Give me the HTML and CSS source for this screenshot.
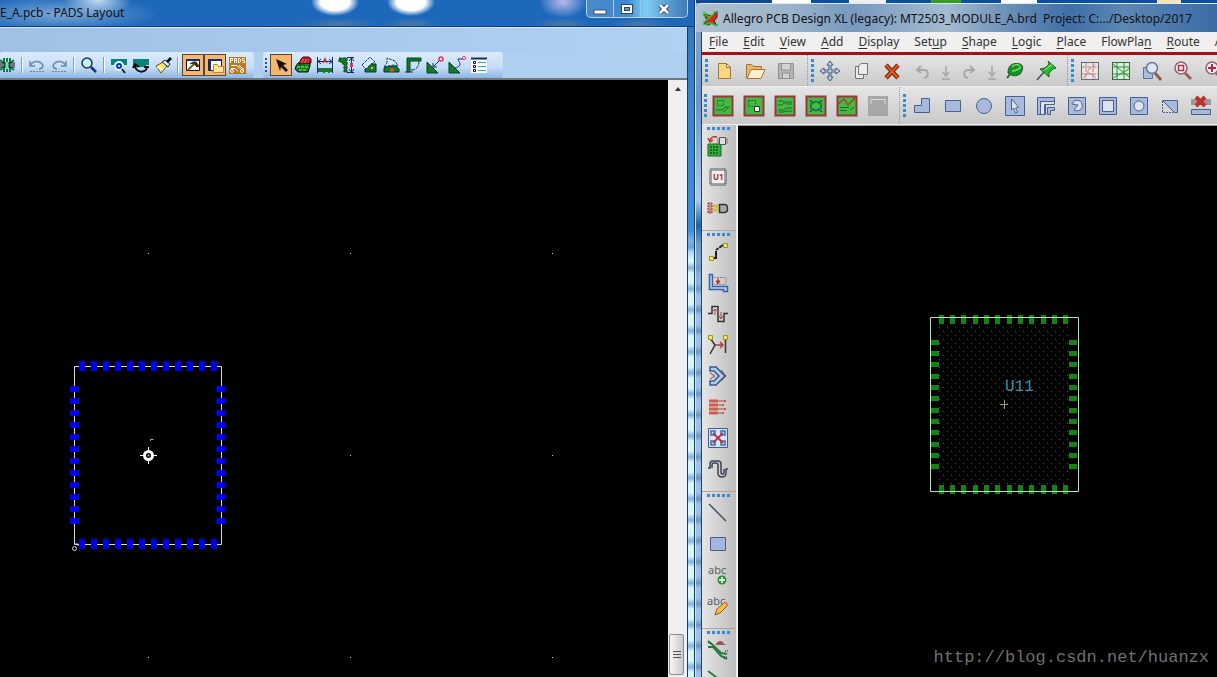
FILE: index.html
```html
<!DOCTYPE html>
<html lang="en">
<head>
<meta charset="utf-8">
<title>PCB layout windows</title>
<link rel="stylesheet" href="styles.css">
</head>
<body>
<main class="desktop">
<section class="window pads">
  <header class="titlebar">
    <span class="title">E_A.pcb - PADS Layout</span>
    <div class="controls">
      <button class="control" aria-label="Minimize"><svg width="14" height="12"><rect x="1" y="7" width="12" height="4" fill="#fff" stroke="#456"/></svg></button>
      <button class="control" aria-label="Maximize"><svg width="14" height="12"><rect x="1.500" y="1.500" width="11" height="9" fill="#fff" stroke="#345"/><rect x="4.500" y="4.500" width="5" height="3" fill="#69b" stroke="#345"/></svg></button>
      <button class="control close" aria-label="Close"><svg width="14" height="12"><path d="M3 2l8 8M11 2l-8 8" stroke="#345" stroke-width="4.500"/><path d="M3 2l8 8M11 2l-8 8" stroke="#fff" stroke-width="2.500"/></svg></button>
    </div>
  </header>
  <div class="client">
    <div class="strip"></div>
    <div class="tools">
      <div class="bar bar-main">
        <button class="tool" aria-label="Route"><svg width="20" height="20" fill="none"><path d="M10 3v14M7 3v5L3 5M13 3v5l4-3M7 17v-5l-4 3M13 17v-5l4 3" stroke="#137c45" stroke-width="2"/><path d="M2 8h16M2 10h16M2 12h16" stroke="#111"/><path d="M9 7h2v7H9z" fill="#4f9"/></svg></button>
        <i class="sep"></i>
        <button class="tool" aria-label="Undo"><svg width="20" height="20" fill="none" stroke="#7187a6"><path d="M3 6v5h5M3 11c3-6 11-6 13 0-1 3-3 3-4 3" stroke-width="1.500"/><path d="M3 16.500h14" stroke-dasharray="2 1"/></svg></button>
        <button class="tool" aria-label="Redo"><svg width="20" height="20" fill="none" stroke="#7187a6"><path d="M17 6v5h-5M17 11C14 5 6 5 4 11c1 3 3 3 4 3" stroke-width="1.500"/><path d="M3 16.500h14" stroke-dasharray="2 1"/></svg></button>
        <i class="sep"></i>
        <button class="tool" aria-label="Zoom"><svg width="20" height="20"><circle cx="8" cy="8" r="5" fill="#bff4ff" stroke="#234" stroke-width="1.500"/><path d="M12 12l5 5" stroke="#138" stroke-width="2.500"/></svg></button>
        <i class="sep"></i>
        <button class="tool" aria-label="Board view"><svg width="20" height="20"><path d="M2 4h16v6h-3v3H5v-3H2z" fill="#078478"/><circle cx="10" cy="11" r="4" fill="#13c" stroke="#dff" stroke-width="2"/><path d="M13 14l3 4" stroke="#123" stroke-width="2"/><circle cx="10" cy="11" r="1" fill="#fff"/></svg></button>
        <button class="tool" aria-label="Redraw"><svg width="20" height="20"><path d="M2 4h16v6h-3v2H5v-2H2z" fill="#078478"/><path d="M4 10c0 8 11 9 12 2M2 13l2-4 4 3M13 12h5" fill="none" stroke="#111" stroke-width="2"/></svg></button>
        <button class="tool" aria-label="Highlight"><svg width="20" height="20"><path d="M3 11l7-4 4 4-6 7z" fill="#ffe66b" stroke="#555"/><path d="M9 7l6 5 2-3-5-4z" fill="#cdeaf5" stroke="#222"/><path d="M13 6l4-4 2 2-4 4z" fill="#111"/><path d="M6 11l4 4M4 12l4 3" stroke="#fff"/></svg></button>
        <i class="sep"></i>
        <button class="tool active" aria-label="Design toolbar"><svg width="20" height="20"><path d="M3.500 4.500h13v11h-13z" fill="#fff" stroke="#111"/><path d="M3 5h14" stroke="#12307c" stroke-width="2"/><path d="M7 9l3-2h3l3 4-2 1-3-3" fill="#3a3519" stroke="#3a3519"/><path d="M11 9l-6 6" stroke="#6a6120" stroke-width="2"/></svg></button>
        <button class="tool active" aria-label="Drafting toolbar"><svg width="20" height="20"><path d="M3.500 4.500h13v11h-13z" fill="#fff" stroke="#223"/><path d="M3 5h14M5 5v10" stroke="#12307c" stroke-width="2"/><path d="M8.500 9.500h4l1 2h5v6h-10z" fill="#ffe49b" stroke="#b58832"/></svg></button>
        <button class="tool" aria-label="PADS Router"><svg width="20" height="20"><rect x="2" y="2" width="17" height="17" fill="#b97822"/><g fill="none" stroke="#fff"><path d="M3.500 8V3.500h2v2h-2M7.500 8V3.500h2V8M7 5.500h3M11.500 3.500h1l1 1v2l-1 1h-1zM17.500 3.500h-2v2h2v2h-2M4 10.500h6l4 4M4 13.500h4l3 3M12 10.500l5 4"/><circle cx="5" cy="16" r="1.500"/><circle cx="15" cy="16" r="1.500"/></g></svg></button>
      </div>
      <div class="bar bar-draft">
        <i class="dots"></i>
        <button class="tool active" aria-label="Select"><svg width="20" height="20"><path d="M5 4l11 5-4 1 5 5-2 2-5-5-1 4z" fill="#111"/></svg></button>
        <button class="tool" aria-label="Move"><svg width="20" height="20"><path d="M3 11l2-3h12v3l-2 6H5l-3-3z" fill="#157a28" stroke="#111"/><path d="M6 9l2-5 2-2h6l2 2v4z" fill="#b91f20" stroke="#411"/><path d="M4 12h12M6 15h8" stroke="#8f5" stroke-dasharray="3 1"/><path d="M9 5h7M8 7h7" stroke="#f77" stroke-dasharray="2 1"/></svg></button>
        <button class="tool" aria-label="Horizontal dimension"><svg width="20" height="20"><path d="M3 13h14v4h-2v1h-2v-1h-3v1H8v-1H3z" fill="#157a28"/><path d="M2.500 2v16M17.500 2v16M3 6.500h14M6 4L3 6.500 6 9M14 4l3 2.500L14 9" fill="none" stroke="#12266e"/><path d="M8 8l2-4 2 4" fill="none" stroke="#c24" stroke-width="1.500"/></svg></button>
        <button class="tool" aria-label="Vertical dimension"><svg width="20" height="20"><path d="M2 3h8v14H7V9H5V7H2z" fill="#157a28" stroke="#042" stroke-dasharray="3 1"/><path d="M10 2.500h7M10 17.500h7M14.500 3v14M12 6l2.500-3L17 6M12 14l2.500 3 2.500-3" fill="none" stroke="#12266e"/><path d="M14.500 8v4" stroke="#d35" stroke-width="3"/></svg></button>
        <button class="tool" aria-label="Aligned dimension"><svg width="20" height="20"><path d="M6 17v-3l5-5h6v8z" fill="#157a28" stroke="#033"/><path d="M3 10l8-8 5 5-4 2-5 5z" fill="#d6eafb" stroke="#12366e" stroke-dasharray="3 1"/><path d="M12 13h2" stroke="#eb4" stroke-width="2"/></svg></button>
        <button class="tool" aria-label="Rotated dimension"><svg width="20" height="20"><path d="M3 17v-4l5-2h7l3 3v3z" fill="#157a28" stroke="#033"/><path d="M3 12l3-4V3l8 3 3 5-4-1-6 1z" fill="#d6eafb" stroke="#12366e" stroke-dasharray="3 1"/><path d="M9 15h4" stroke="#e42" stroke-width="3"/></svg></button>
        <button class="tool" aria-label="Angular dimension"><svg width="20" height="20"><path d="M4 3h14v3H7v11H4z" fill="#157a28" stroke="#042"/><path d="M8 15c6 0 8-4 8-9M2 17h8" fill="none" stroke="#12366e" stroke-dasharray="4 1"/></svg></button>
        <button class="tool" aria-label="Arc dimension"><svg width="20" height="20"><path d="M2 7l11 11H2z" fill="#157a28" stroke="#042"/><path d="M8 12l6-6M8 8v4h4" fill="none" stroke="#12266e"/><circle cx="16" cy="4" r="2" fill="none" stroke="#d35" stroke-width="1.500"/></svg></button>
        <button class="tool" aria-label="Leader"><svg width="20" height="20"><path d="M2 7l11 11H2z" fill="#157a28" stroke="#042"/><path d="M8 13c9-2 3-7 3-9h6" fill="none" stroke="#12266e"/><circle cx="17" cy="3" r="1.500" fill="#fff" stroke="#d35"/></svg></button>
        <button class="tool" aria-label="Options"><svg width="20" height="20"><path d="M2 2h16v16H2z" fill="#f7fbff"/><path d="M2 3.500h16" stroke="#12266e" stroke-width="2"/><path d="M4.500 6.500h2v2h-2zM4.500 10.500h2v2h-2zM4.500 14.500h2v2h-2z" fill="none" stroke="#111"/><path d="M9 7.500h8M9 11.500h8M9 15.500h8" stroke="#3ab"/></svg></button>
      </div>
    </div>
    <div class="work">
      <svg class="canvas" role="img" aria-label="Board footprint">
        <path d="M74.500 286.500h147v178h-147z" fill="none" stroke="#d8d8d8"/>
        <g stroke="#0000f0" fill="none">
          <path d="M79 286h138M79 464h138" stroke-width="10" stroke-dasharray="6 6"/>
          <path d="M74.500 306v138M221 306v138" stroke-width="9" stroke-dasharray="6 6"/>
        </g>
        <path d="M148.500 367v17M140 375.500h17" stroke="#fff"/>
        <circle cx="148.500" cy="375.500" r="4" fill="#000" stroke="#fff" stroke-width="3"/>
        <circle cx="148.500" cy="375.500" r="1" fill="#ccc"/>
        <path d="M150.500 361v-1.500h3" fill="none" stroke="#aaa"/>
        <circle cx="74.500" cy="468.500" r="2" fill="none" stroke="#ddd"/>
        <path d="M75 464h3v2" fill="none" stroke="#ddd"/>
        <path d="M148 173.500h1m201 0h1m201 0h1M350 375.500h1m201 0h1M148 577.500h1m201 0h1m201 0h1" stroke="#ccc"/>
      </svg>
      <div class="scrollbar">
        <button class="scroll-up" aria-label="Scroll up"><svg width="8" height="6"><path d="M1 5l3-4 3 4z" fill="#333"/></svg></button>
        <button class="thumb" aria-label="Scroll position"><svg width="8" height="10"><path d="M0 1.500h8M0 4.500h8M0 7.500h8" stroke="#555"/></svg></button>
      </div>
    </div>
  </div>
</section>

<section class="window allegro">
  <div class="wallpaper"></div>
  <header class="titlebar">
    <svg width="17" height="17"><path d="M2 5c3-3 6 3 9 0l4-4v6l-3 4 3 5-5-3-4 2-4-1 3-4z" fill="#dc2419" stroke="#511"/><path d="M1 2c4 0 3 4 6 5M11 2h4M12 4c-5 2-5 7-11 8M1 14c4 2 5-2 8-1s4 4 7 1M1 4l2 3" fill="none" stroke="#19d332" stroke-width="1.500"/></svg>
    <span class="title">Allegro PCB Design XL (legacy): MT2503_MODULE_A.brd&nbsp; Project: C:.../Desktop/2017</span>
  </header>
  <div class="client">
    <nav class="menu">
      <button><u>F</u>ile</button><button><u>E</u>dit</button><button><u>V</u>iew</button><button><u>A</u>dd</button><button><u>D</u>isplay</button><button>Set<u>u</u>p</button><button><u>S</u>hape</button><button><u>L</u>ogic</button><button><u>P</u>lace</button><button>FlowPla<u>n</u></button><button><u>R</u>oute</button><button>A</button>
    </nav>
    <div class="row">
      <div class="group">
        <i class="grip"></i>
        <button class="icon" aria-label="New"><svg width="22" height="22"><path d="M5.500 3.500h8l4 4v11h-12z" fill="#fbd488" stroke="#a8782a"/><path d="M13.500 3.500v4h4z" fill="#fff3cf" stroke="#a8782a"/></svg></button>
        <button class="icon" aria-label="Open"><svg width="22" height="22"><path d="M2.500 18V4.500h5l2 2h8v4" fill="#e9b765" stroke="#a47532"/><path d="M3 18.500l4-9h14l-4 9z" fill="#fff0d0" stroke="#a47532"/></svg></button>
        <button class="icon" aria-label="Save" disabled><svg width="22" height="22"><path d="M3.500 3.500h15v15h-15z" fill="#b4b4b4" stroke="#929292"/><path d="M6.500 4v6h9V4M7.500 18v-5h7v5" fill="#d3d3d3" stroke="#929292"/></svg></button>
      </div>
      <div class="group">
        <i class="grip"></i>
        <button class="icon" aria-label="Move"><svg width="22" height="22"><path d="M11 1l3 4h-2v5h5V8l4 3-4 3v-2h-5v5h2l-3 4-3-4h2v-5H5v2l-4-3 4-3v2h5V5H8z" fill="#c3d2e4" stroke="#41597b"/></svg></button>
        <button class="icon" aria-label="Copy"><svg width="22" height="22" fill="#ececec" stroke="#6f7478"><path d="M5.500 6.500h8v12h-8z"/><path d="M11 3.500h6.500v11h-9V6z"/></svg></button>
        <button class="icon" aria-label="Delete"><svg width="22" height="22"><path d="M5 5l12 13M17 5L5 18" stroke="#77250b" stroke-width="4.500"/><path d="M5 5l12 13M17 5L5 18" stroke="#dd5a21" stroke-width="2"/></svg></button>
        <button class="icon" aria-label="Undo" disabled><svg width="22" height="22" fill="none" stroke="#a7a7a7"><path d="M9 6l-4 4 4 3M5 10h7c5 0 5 7 0 8" stroke-width="2"/></svg></button>
        <button class="icon narrow" aria-label="Undo steps" disabled><svg width="12" height="22" fill="none" stroke="#a7a7a7"><path d="M6 6v9M3 12l3 4 3-4M2 19h8" stroke-width="1.500"/></svg></button>
        <button class="icon" aria-label="Redo" disabled><svg width="22" height="22" fill="none" stroke="#a7a7a7"><path d="M12 6l4 4-4 3M16 10h-6c-5 0-5 7 0 8" stroke-width="2"/></svg></button>
        <button class="icon narrow" aria-label="Redo steps" disabled><svg width="12" height="22" fill="none" stroke="#a7a7a7"><path d="M6 6v9M3 12l3 4 3-4M2 19h8" stroke-width="1.500"/></svg></button>
        <button class="icon" aria-label="Fix"><svg width="22" height="22"><path d="M3 18l4-5" stroke="#285e2d" stroke-width="2"/><path d="M4 13c0-7 4-11 12-9 4 1 3 7 0 10-3 2-7 3-12-1z" fill="#19902a" stroke="#175c20"/><path d="M8 7c2-3 6-3 8-1M8 11c3 0 7-2 9-4" fill="none" stroke="#78dd76" stroke-width="1.500"/></svg></button>
        <button class="icon" aria-label="Unfix"><svg width="22" height="22"><path d="M2 20l7-8" stroke="#3d5741" stroke-width="1.500"/><path d="M13 1l8 7-3 1-4 4v4L5 9l5-1 4-4z" fill="#2cb435" stroke="#12691f"/><path d="M10 10l5-4 2-1" fill="none" stroke="#a3ed9e"/></svg></button>
      </div>
      <div class="group">
        <i class="grip"></i>
        <button class="icon" aria-label="Grid"><svg width="22" height="22"><rect x="2.500" y="2.500" width="17" height="17" fill="#e9e6e8" stroke="#626b78"/><path d="M3 7h16M3 14h16M7 3v16M14 3v16M4 18l5-5v-3l8-6M10 13l7 5" fill="none" stroke="#c27f79" stroke-dasharray="4 1"/></svg></button>
        <button class="icon" aria-label="Ratsnest"><svg width="22" height="22"><rect x="2.500" y="2.500" width="17" height="17" fill="#d9efd7" stroke="#3b6847"/><path d="M3 7h16M3 14h16M7 3v16M14 3v16M3 4l16 13M3 18l16-9" stroke="#349044"/></svg></button>
        <button class="icon" aria-label="Zoom by points"><svg width="22" height="22"><path d="M2.500 7.500h9v11h-9z" fill="#a3bce0" stroke="#5573a1"/><path d="M14 13l6 7" stroke="#985c43" stroke-width="3"/><circle cx="11" cy="8" r="5.500" fill="#dce9f4" stroke="#6f7893" stroke-width="1.500"/></svg></button>
        <button class="icon" aria-label="Zoom fit"><svg width="22" height="22"><path d="M13 13l6 6" stroke="#986252" stroke-width="3"/><circle cx="9" cy="8" r="6" fill="#f3edf1" stroke="#8b6673" stroke-width="1.500"/><path d="M6.500 5.500h5v5h-5z" fill="none" stroke="#aa3750" stroke-width="1.500"/></svg></button>
        <button class="icon" aria-label="Zoom in"><svg width="22" height="22"><path d="M13 13l6 6" stroke="#986252" stroke-width="3"/><circle cx="9" cy="8" r="6" fill="#f3edf1" stroke="#8b6673" stroke-width="1.500"/><path d="M9 4v8M5 8h8" stroke="#b4243f" stroke-width="2"/></svg></button>
      </div>
    </div>
    <div class="row">
      <div class="group modes">
        <i class="grip"></i>
        <button class="icon" aria-label="Etch edit mode"><svg width="22" height="22"><rect x="1.500" y="1.500" width="19" height="19" fill="#46b844" stroke="#99353c" stroke-width="2"/><g fill="none" stroke="#176e22"><path d="M5.500 5.500h6v5h-6z" stroke-dasharray="2 1"/><path d="M4 15h6l3-3h5M11 17l5-4"/></g></svg></button>
        <button class="icon" aria-label="Placement mode"><svg width="22" height="22"><rect x="1.500" y="1.500" width="19" height="19" fill="#46b844" stroke="#99353c" stroke-width="2"/><path d="M5.500 5.500h7v6h-7z" fill="none" stroke="#176e22" stroke-dasharray="2 1"/><path d="M11.500 11.500h5v5h-5z" fill="#eef6ee" stroke="#333"/></svg></button>
        <button class="icon" aria-label="Flow mode"><svg width="22" height="22"><rect x="1.500" y="1.500" width="19" height="19" fill="#46b844" stroke="#99353c" stroke-width="2"/><path d="M4 6h5l3 3h6M4 10h4l3-3h7M4 15h6l2-2h6M5 17h4l4-1h5" fill="none" stroke="#176e22"/></svg></button>
        <button class="icon" aria-label="General edit"><svg width="22" height="22"><rect x="1.500" y="1.500" width="19" height="19" fill="#46b844" stroke="#99353c" stroke-width="2"/><path d="M5 5l3 3c2-2 4-2 6 0l3-3M5 17l3-3c2 2 4 2 6 0l3 3M6 8v6M16 8v6" fill="none" stroke="#176154" stroke-width="1.500"/></svg></button>
        <button class="icon" aria-label="Signal mode"><svg width="22" height="22"><rect x="1.500" y="1.500" width="19" height="19" fill="#46b844" stroke="#99353c" stroke-width="2"/><path d="M2 9l6-5 4 6 7-7" fill="none" stroke="#984925" stroke-width="1.500"/><path d="M4 12.500h9M4 15.500h7M14 15l4-3" fill="none" stroke="#176e22"/></svg></button>
        <button class="icon" aria-label="Shape mode" disabled><svg width="22" height="22"><rect x="1" y="1" width="20" height="20" fill="#a7a7a7"/><path d="M4 9V4.500h14V9" fill="none" stroke="#ddd"/></svg></button>
      </div>
      <div class="group shapes">
        <i class="grip"></i>
        <button class="icon" aria-label="Polygon"><svg width="22" height="22"><path d="M10.500 3.500h8v14h-15v-7h7z"/></svg></button>
        <button class="icon" aria-label="Rectangle"><svg width="22" height="22"><path d="M3.500 5.500h15v11h-15z"/></svg></button>
        <button class="icon" aria-label="Circle"><svg width="22" height="22"><circle cx="11" cy="11" r="7.500"/></svg></button>
        <button class="icon" aria-label="Select shape"><svg width="22" height="22"><path d="M1.500 1.500h19v19h-19z"/><path class="inner" d="M7.500 4l7 8-3 1 2 4-2 1-2-5-2 2z"/></svg></button>
        <button class="icon" aria-label="Void polygon"><svg width="22" height="22"><path d="M2.500 2.500h17v5h-9v12h-8z"/><path class="inner" d="M5.500 6.500h14v3h-10v10h-4z"/><path d="M12.500 12.500h7v3h-4v4h-3z"/></svg></button>
        <button class="icon" aria-label="Void arc"><svg width="22" height="22"><path d="M2.500 2.500h17v17h-17z"/><path class="inner" d="M6 9c2-5 9-5 10 0 2 6-5 8-8 6l4-5z"/></svg></button>
        <button class="icon" aria-label="Void rectangle"><svg width="22" height="22"><path d="M2.500 2.500h17v17h-17z"/><path class="inner" d="M5.500 5.500h11v11h-11z"/></svg></button>
        <button class="icon" aria-label="Void circle"><svg width="22" height="22"><path d="M2.500 2.500h17v17h-17z"/><circle class="inner" cx="11" cy="11" r="5"/></svg></button>
        <button class="icon" aria-label="Edit boundary"><svg width="22" height="22"><path d="M3.500 5.500h15v12h-3z"/><path class="hollow" d="M3.500 6v11.500h11" stroke-dasharray="2 1"/></svg></button>
        <button class="icon" aria-label="Delete islands"><svg width="22" height="22"><path d="M1.500 14.500h19v5h-19z"/><path class="muted" d="M1 4h20v6H1z"/><path class="cross" d="M6 2l9 9M15 2l-9 9"/></svg></button>
      </div>
    </div>
    <div class="work">
      <aside class="side">
        <div class="vgroup">
          <i class="hgrip"></i>
          <button class="icon" aria-label="Place manual"><svg width="22" height="22"><path d="M1 9h13v12H1z" fill="#36ac3d" stroke="#176625"/><path d="M3 12h9M3 15h9M3 18h9" stroke="#136a20" stroke-width="2" stroke-dasharray="2 1"/><path d="M10 4h11M10 6h11M10 8h11" stroke="#777"/><path d="M12.500 2.500h6v7h-6z" fill="#ddd" stroke="#555"/><path d="M10 2c-4-1-6 0-7 4M1 3l2 4 3-2" fill="none" stroke="#b93431" stroke-width="1.500"/></svg></button>
          <button class="icon" aria-label="Component"><svg width="22" height="22"><path d="M3.500 3.500h15v15h-15z" fill="#efefef" stroke="#505b65" stroke-width="3" stroke-dasharray="1 1"/><text class="chip" x="6" y="14">U1</text></svg></button>
          <button class="icon" aria-label="Swap"><svg width="22" height="22"><path d="M1 6h4v10H1z" fill="#d1868c" stroke="#833" stroke-dasharray="2 1"/><path d="M6 9h5M6 13h5" stroke="#cebf2c" stroke-width="3"/><path d="M12.500 7.500h5c4 0 4 8 0 8h-5z" fill="#aaa" stroke="#333" stroke-width="1.500"/></svg></button>
        </div>
        <div class="vgroup">
          <i class="hgrip"></i>
          <button class="icon" aria-label="Add connect"><svg width="22" height="22"><path d="M4 17h5V9l7-5" fill="none" stroke="#222" stroke-width="2" stroke-dasharray="12 1 3 1"/><path d="M2.500 15.500h4v4h-4zM16.500 2.500h4v4h-4z" fill="#f3e959" stroke="#9a922e"/></svg></button>
          <button class="icon" aria-label="Slide"><svg width="22" height="22"><path d="M2.500 2.500h3v12h15v5h-4v-2h-14z" fill="#b9d4f2" stroke="#3e619f" stroke-width="1.500"/><path d="M7 5.500h12v7H7" fill="none" stroke="#789" stroke-dasharray="2 1"/><path d="M11 6v4M9 9l2 3 2-3z" fill="#b53333" stroke="#b53333"/></svg></button>
          <button class="icon" aria-label="Delay tune"><svg width="22" height="22" fill="none"><path d="M1 10.500h4v-7h6v15h6v-8h4" stroke="#333" stroke-width="1.500"/><path d="M8 12V6M6 8l2-2 2 2M14 9v6M12 13l2 3 2-3" stroke="#ae3c43"/></svg></button>
          <button class="icon" aria-label="Custom smooth"><svg width="22" height="22" fill="none"><path d="M3 4l5 7-5 9M18.500 4v15" stroke="#333" stroke-width="1.500"/><path d="M8 11h7M13 8l3 3-3 3" stroke="#b33c3c" stroke-width="1.500"/><path d="M1.500 1.500h4v4h-4zM16.500 1.500h4v4h-4z" fill="#f0e65a" stroke="#9a922e"/></svg></button>
          <button class="icon" aria-label="Spread"><svg width="22" height="22"><path d="M3 2h6l9 9-9 9H3v-4h4l5-5-5-5H3z" fill="#b2cdec" stroke="#37588e" stroke-width="1.500"/><path d="M3 8l5 3-5 3M14 5l5 6-5 5" fill="none" stroke="#8c3943"/></svg></button>
          <button class="icon" aria-label="Bus route"><svg width="22" height="22"><path d="M2 5h9M2 9h9M2 13h9M2 17h9" stroke="#cc5e50" stroke-width="3"/><path d="M11 5h7M11 9h5M11 13h7M11 17h5" stroke="#a8483e"/><path d="M17 4h2v2h-2zM15 8h2v2h-2zM17 12h2v2h-2zM15 16h2v2h-2z" fill="#c65b49"/></svg></button>
          <button class="icon" aria-label="Fanout"><svg width="22" height="22"><path d="M1.500 1.500h19v19h-19z" fill="#d8e6f6" stroke="#3e5c9e"/><path d="M4 4h4v4H4zM14 4h4v4h-4zM4 14h4v4H4zM14 14h4v4h-4z" fill="none" stroke="#4169ad" stroke-width="1.500"/><path d="M6 6l10 10M16 6L6 16" stroke="#b4384a" stroke-width="2"/></svg></button>
          <button class="icon" aria-label="Meander"><svg width="22" height="22" fill="none"><path d="M1 10h2V6c0-2 1-3 3-3h5c2 0 3 1 3 3v8M5 10V7c0-1 1-2 2-2h2c1 0 2 1 2 2v8c0 3 2 4 4 4s4-1 4-4v-4h2M14 14c0 3 3 3 3 0v-3" stroke="#3b4356" stroke-width="1.500"/></svg></button>
        </div>
        <div class="vgroup">
          <i class="hgrip"></i>
          <button class="icon" aria-label="Line"><svg width="22" height="22"><path d="M2 2l17 17" stroke="#42536a" stroke-width="1.500"/></svg></button>
          <button class="icon" aria-label="Rectangle"><svg width="22" height="22"><path d="M3.500 4.500h15v13h-15z" fill="#a5b5df" stroke="#48628f"/></svg></button>
          <button class="icon" aria-label="Add text"><svg width="22" height="26"><text class="abc" x="1" y="12">abc</text><circle cx="15" cy="18" r="4.500" fill="#2d9235"/><path d="M15 15v6M12 18h6" stroke="#fff" stroke-width="1.500"/></svg></button>
          <button class="icon" aria-label="Edit text"><svg width="22" height="26"><text class="abc" x="0" y="12">abc</text><path d="M8 22l2-6 8-7 3 3-8 8z" fill="#f3bc42" stroke="#8d5923"/><path d="M18 9l3 3" stroke="#dd796e" stroke-width="2"/></svg></button>
        </div>
        <div class="vgroup">
          <i class="hgrip"></i>
          <button class="icon" aria-label="Net route"><svg width="22" height="22"><path d="M1 2l6 5 7 7 6 1M1 8h5l8 9 6 3" fill="none" stroke="#287d43" stroke-width="2"/><path d="M1 4h4M17 18h4M18 12h3" stroke="#222" stroke-dasharray="1 1"/><path d="M9 5c2-4 7-4 8 0l3 1H9z" fill="#985553"/></svg></button>
          <button class="icon" aria-label="Net edit"><svg width="22" height="22"><path d="M1 1l8 6 8 8" fill="none" stroke="#287d43" stroke-width="2"/></svg></button>
        </div>
      </aside>
      <div class="board">
        <svg class="canvas" role="img" aria-label="Module footprint U11">
          <defs><pattern id="mesh" width="8" height="8" patternUnits="userSpaceOnUse"><path d="M1 1.500h1M5 5.500h1" stroke="#4b574b"/></pattern></defs>
          <path d="M200 199h133v159H200z" fill="url(#mesh)"/>
          <g stroke="#168116">
            <path d="M201 193.500h130M201 363.500h130" stroke-width="9" stroke-dasharray="5 6 5 6 5 7"/>
            <path d="M197 214v130M335 214v130" stroke-width="8" stroke-dasharray="5 6 5 6 5 7"/>
          </g>
          <path d="M192.500 191.500h148v174h-148z" fill="none" stroke="#a3efb2"/>
          <path d="M262 278.500h8M266.500 274v9" stroke="#87a57b"/>
          <text class="refdes" x="267" y="265">U11</text>
        </svg>
        <span class="watermark">http://blog.csdn.net/huanzx</span>
      </div>
    </div>
  </div>
</section>
</main>
</body>
</html>
```
FILE: styles.css
```css
* { box-sizing: border-box; }
body {
  margin: 0;
  font-family: "Noto Sans", "Open Sans", sans-serif;
  font-size: 12px;
  color: #111;
}
button {
  display: flex;
  flex: none;
  align-items: center;
  justify-content: center;
  padding: 0;
  border: 0;
  background: none;
  color: inherit;
  font: inherit;
}
svg { display: block; flex: none; }
.desktop {
  display: grid;
  grid-template-columns: 695fr 522fr;
  height: 100vh;
  overflow: hidden;
  background: #1c63b3;
}
.window {
  display: flex;
  flex-direction: column;
  min-width: 0;
  min-height: 0;
  overflow: hidden;
}
.titlebar { display: flex; flex: none; white-space: nowrap; }
.client {
  display: flex;
  flex: 1;
  flex-direction: column;
  min-height: 0;
}
.work { display: flex; flex: 1; min-height: 0; }
.canvas {
  flex: 1;
  width: 100%;
  height: 100%;
  min-width: 0;
  background: #000;
}

.pads {
  background:
    linear-gradient(#2e74bd 0, #3585cf 100px, #3c8fd9 230px, transparent 260px),
    repeating-linear-gradient(#d5f8ff 0 10px, #7fb3de 16px, #d5f8ff 21px);
  border-right: 1px solid #16365c;
}
.pads .titlebar {
  height: 27px;
  align-items: flex-start;
  justify-content: space-between;
  border-bottom: 1px solid #143e73;
  background:
    radial-gradient(ellipse 34px 16px at 98px 0, #c3dcf2, transparent),
    radial-gradient(ellipse 100px 18px at 60px 14px, #7ba6d3, transparent),
    radial-gradient(ellipse 24px 14px at 335px 2px, #fff 60%, transparent),
    radial-gradient(ellipse 24px 14px at 411px 2px, #fff 60%, transparent),
    radial-gradient(ellipse 40px 6px at 338px 24px, #4b79a4, transparent),
    radial-gradient(ellipse 28px 6px at 411px 24px, #4b79a4, transparent),
    radial-gradient(ellipse 24px 16px at 563px 2px, #bdb9ec, transparent),
    radial-gradient(ellipse 30px 6px at 562px 24px, #4b79a4, transparent),
    radial-gradient(ellipse 30px 6px at 640px 24px, #4b79a4, transparent),
    #1d68bb;
}
.pads .title { line-height: 26px; }
.controls {
  display: flex;
  height: 18px;
  margin-right: 6px;
  border: 1px solid #b9d4ec;
  border-top: 0;
  border-radius: 0 0 5px 5px;
  background: linear-gradient(90deg, #4a8bc8, #3a89d2 40%, #7fcdf5 58%, #3d79b7);
}
.control { width: 27px; border-right: 1px solid #a3c5e3; }
.close { width: 46px; border-right: 0; }
.pads .client {
  margin-right: 6px;
  border-right: 1px solid #1d3b60;
  background: #afcff0;
}
.strip {
  height: 25px;
  border-top: 1px solid #d4e7f9;
  background: linear-gradient(90deg, #9fc1e6, #b0d1f2);
}
.tools {
  display: flex;
  gap: 9px;
  height: 28px;
  border-bottom: 2px solid #6f7780;
}
.bar {
  display: flex;
  align-items: center;
  border-radius: 3px;
  background: linear-gradient(#dcebfc, #c4dcf6 60%, #8eb6e3);
}
.bar-main { width: 254px; }
.bar-main .tool:first-child { margin-left: -4px; }
.bar-draft { width: 240px; }
.tool { width: 22px; height: 22px; }
.active { border: 1px solid #55483c; background: #f8b56c; }
.sep {
  width: 2px;
  height: 16px;
  margin: 0 3px;
  border-left: 1px solid #7d9fc8;
  background: #fff;
}
.dots {
  width: 2px;
  height: 15px;
  margin: 0 3px 0 2px;
  background: repeating-linear-gradient(#36547f 0 2px, transparent 2px 4px);
}
.scrollbar {
  display: flex;
  flex: none;
  flex-direction: column;
  justify-content: space-between;
  width: 19px;
  padding-bottom: 2px;
  background: #efefef;
}
.scroll-up { height: 18px; }
.thumb {
  width: 15px;
  height: 41px;
  margin-left: 1px;
  border: 1px solid #8d8d8d;
  border-radius: 2px;
  background: linear-gradient(90deg, #f7f7f7, #c9c9c9);
}

.allegro {
  border-left: 1px solid #d5e5f3;
  background:
    linear-gradient(#8ca9c8 0, #6c96c2 100px, #adcbe8 200px, #1f619f 225px, #6d9dcf 245px, transparent 300px),
    repeating-linear-gradient(#9cc2e8 0 10px, #6f92bf 16px, #9cc2e8 21px);
}
.wallpaper {
  flex: none;
  height: 3px;
  background: linear-gradient(90deg, #0d4692 0 76px, #fff 76px 115px, #0d4f9f 115px 153px, #eee 153px 190px, #0d4f9f 190px 235px, #379c25 235px 265px, #0d4f9f 265px 305px, #fff 305px 341px, #0d4f9f 341px 461px, #f2e7b4 461px 485px, #0d4f9f 485px);
}
.allegro .titlebar {
  align-items: center;
  gap: 4px;
  height: 29px;
  padding-left: 6px;
  border-top: 1px solid #dceaf5;
  border-top-left-radius: 6px;
  background: linear-gradient(90deg, #aebfce, #9bb4cb 18%, #7799be 30%, #a4bbd0 48%, #6b8fb8 60%, #3f6fa6 72%, #5d87b5 82%, #3b6ca5);
}
.allegro .client {
  margin-left: 5px;
  border-left: 1px solid #27425f;
  background: #d7d7d7;
}
.menu {
  display: flex;
  flex: none;
  gap: 15px;
  height: 23px;
  padding: 0 0 2px 7px;
  overflow: hidden;
  border-bottom: 3px solid #a90f18;
  background: #f0f0f0;
  color: #333;
}
u { text-underline-offset: 2px; }
.row {
  display: flex;
  flex: none;
  height: 32px;
  overflow: hidden;
  border-bottom: 1px solid #eee;
  background: linear-gradient(#e5e5e5, #c9c9c9);
}
.row + .row { height: 38px; }
.group {
  display: flex;
  flex: none;
  align-items: center;
  padding: 0 6px 0 3px;
  border-right: 1px dotted #999;
}
.group:last-child { border-right: 0; }
.modes { padding-left: 2px; }
.grip {
  width: 3px;
  height: 23px;
  background: repeating-linear-gradient(#378ad6 0 3px, transparent 3px 5px);
}
.icon { width: 31px; height: 31px; }
.narrow { width: 15px; }
.shapes svg * { fill: #a9b9de; stroke: #48628f; stroke-width: 1; }
.shapes svg .inner { fill: #dce2ee; }
.shapes svg .hollow { fill: none; }
.shapes svg .muted { fill: #999; stroke: none; }
.shapes svg .cross { stroke: #be3227; stroke-width: 4; }
.side {
  flex: none;
  width: 36px;
  overflow: hidden;
  border-right: 2px solid #eee;
  background: linear-gradient(90deg, #e5e5e5, #bebebe);
}
.vgroup {
  padding: 2px 0 7px;
  border-bottom: 1px solid #b3a59c;
}
.hgrip {
  display: block;
  width: 23px;
  height: 3px;
  margin: 0 0 0 5px;
  background: repeating-linear-gradient(90deg, #378ad6 0 3px, transparent 3px 5px);
}
.chip { fill: #a23232; font-size: 8px; font-weight: bold; }
.abc { fill: #5d5d5d; font-size: 11px; }
.board {
  position: relative;
  flex: 1;
  min-width: 0;
  overflow: hidden;
  border-top: 1px solid #999;
}
.refdes { fill: #3991aa; font-family: "Liberation Mono", monospace; font-size: 16px; }
.watermark {
  position: absolute;
  right: 8px;
  bottom: 10px;
  color: #707070;
  font-family: "Liberation Mono", monospace;
  font-size: 17px;
}
```
